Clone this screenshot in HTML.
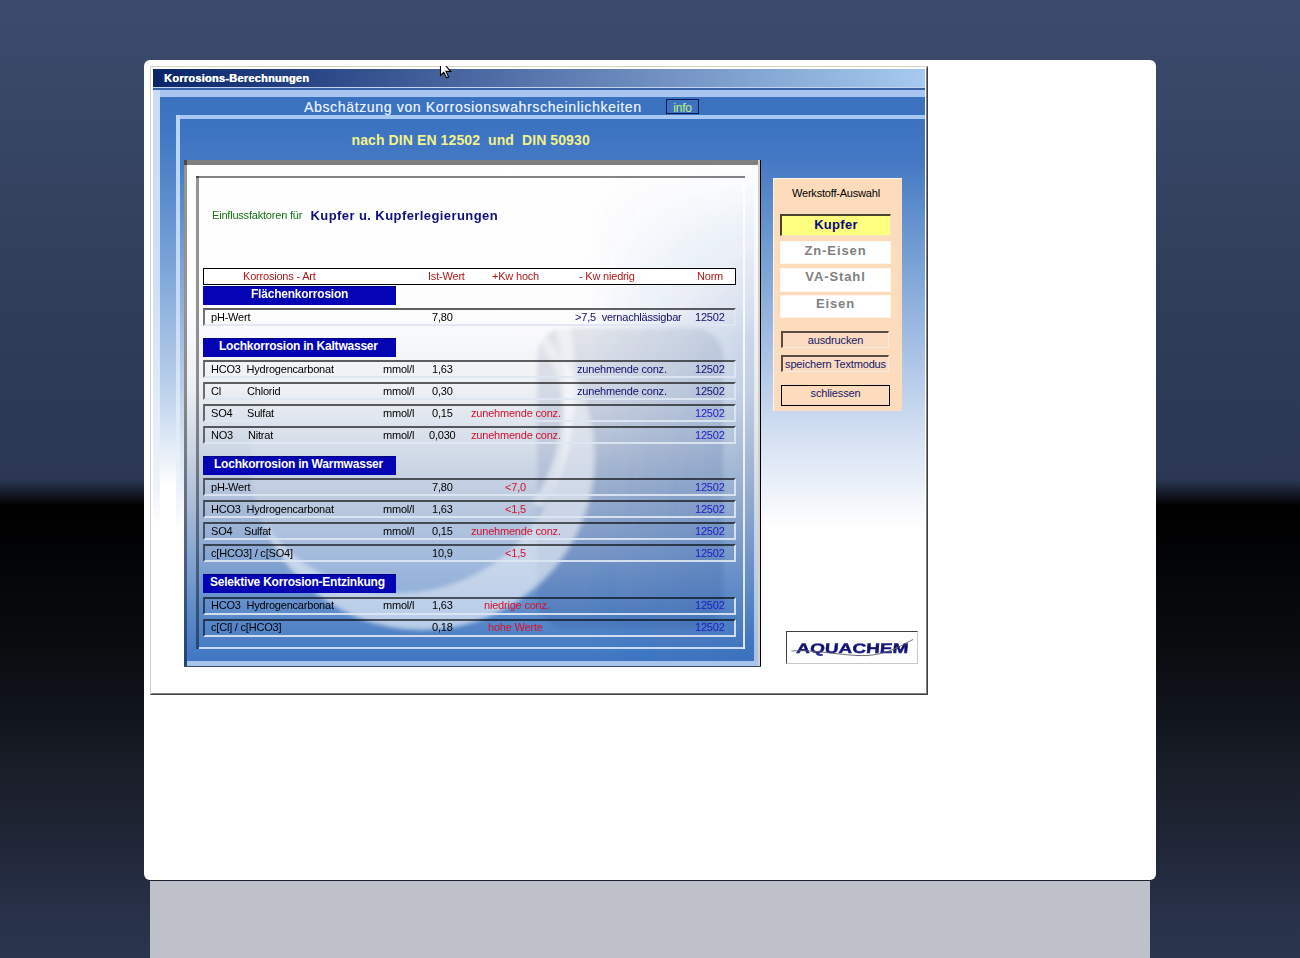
<!DOCTYPE html>
<html><head><meta charset="utf-8">
<style>
*{margin:0;padding:0;box-sizing:border-box}
html,body{width:1300px;height:958px;overflow:hidden}
body{position:relative;font-family:"Liberation Sans",sans-serif;
background:linear-gradient(to bottom,#3c4b6c 0px,#364463 160px,#2f3d58 300px,#2b3753 480px,#151b28 493px,#000 506px,#030406 560px,#0a0c10 650px,#11151d 720px,#1a1e28 770px,#1e2332 820px,#232a3e 870px,#283249 920px,#2a354e 958px);}
.a{position:absolute}
#wp{left:144px;top:60px;width:1012px;height:820px;background:#fff;border-radius:6px}
#gb{left:150px;top:880px;width:1000px;height:78px;background:#bec1ca;border-top:1px solid #1c2233}
#win{left:150px;top:66px;width:778px;height:629px;border-top:1px solid #d4d0c8;border-left:1px solid #d4d0c8;border-right:1px solid #404040;border-bottom:1px solid #404040}
#win2{left:151px;top:67px;width:776px;height:627px;border-top:1px solid #fff;border-left:1px solid #fff;border-right:1px solid #808080;border-bottom:1px solid #808080;background:#fff}
#title{left:153px;top:69px;width:772px;height:18px;background:linear-gradient(to right,#0a246a,#a6caf0)}
#title span{position:absolute;left:11px;top:3px;color:#fff;font-weight:bold;font-size:11px;letter-spacing:0.25px;text-shadow:0.35px 0 0 #fff}
#tl1{left:153px;top:87px;width:772px;height:1px;background:#c4d4ee}
#tl2{left:153px;top:88px;width:772px;height:2px;background:#3a62a6}
#outer{left:153px;top:90px;width:772px;height:602px;background:linear-gradient(to bottom,#3a72c0 0px,#3c74c2 40px,#4478c4 70px,#6a98d0 145px,#9ab8e0 235px,#d4e0f2 345px,#fff 440px)}
#otop{left:153px;top:90px;width:772px;height:7px;background:#a8c6f0}
#lstrip{left:160px;top:97px;width:16px;height:594px;background:linear-gradient(to bottom,#3a72c0 0px,#3e76c2 30px,#5a8ccd 100px,#8ab0dc 200px,#c0d4ec 300px,#fff 390px)}
#oleft{left:153px;top:90px;width:7px;height:601px;background:linear-gradient(to bottom,#c8dcf4 0,#d0e0f4 200px,#f0f4fa 400px,#fff 440px)}
#hdr{left:304px;top:98.5px;color:#e8f0ff;font-size:14px;letter-spacing:0.66px;text-shadow:0.15px 0 0 rgba(232,240,255,.6);white-space:nowrap}
#info{left:666px;top:99px;width:33px;height:15px;border:1px solid #0a1650;color:#c4f27c;font-size:12px;text-align:center;line-height:16px;letter-spacing:-0.2px}
#itop{left:176px;top:115px;width:749px;height:4px;background:#a8c8f4}
#ileft{left:176px;top:115px;width:4px;height:576px;background:linear-gradient(to bottom,#b8d4f8 0,#c8dcf4 200px,#eef4fb 380px,#fff 420px)}
#din{left:351.5px;top:132px;color:#f2f28a;font-size:14px;font-weight:bold;white-space:pre;letter-spacing:0.1px}

#cp{left:184px;top:160px;width:577px;height:507px;background:linear-gradient(to bottom,#fff 0px,#fdfdfe 150px,#eceff4 230px,#ccd6e4 290px,#aebfd9 340px,#84a4d2 400px,#5e8cca 450px,#3c74c2 507px)}
#cpt{left:184px;top:160px;width:574px;height:5px;background:#808080}
#cpl{left:184px;top:160px;width:3px;height:506px;background:rgba(0,0,0,.42)}
#cpr1{left:754px;top:165px;width:4px;height:497px;background:rgba(255,255,255,.55)}
#cpr2{left:758px;top:160px;width:2px;height:507px;background:#d4d0c8}
#cpr3{left:760px;top:160px;width:1px;height:507px;background:#000}
#cpb{left:187px;top:661px;width:571px;height:5px;background:#a8c4ec}
#cpb2{left:184px;top:666px;width:577px;height:1px;background:#3a4a6a}
#frt{left:196px;top:176px;width:549px;height:2px;background:rgba(0,0,0,.48)}
#frl{left:196px;top:176px;width:3px;height:473px;background:rgba(0,0,0,.42)}
#frb{left:199px;top:647px;width:546px;height:2px;background:#c8dcf8}
#frr{left:743px;top:178px;width:2px;height:471px;background:rgba(255,255,255,.8)}
.t{position:absolute;font-size:11px;letter-spacing:-0.2px;white-space:pre;line-height:13px}
#einf{left:212px;top:209px;color:#187018}
#kupf{left:310.5px;top:208.5px;color:#10107a;font-size:13px;font-weight:bold;letter-spacing:0.42px}
#hrow{left:203px;top:268px;width:533px;height:17px;border:1px solid #000;background:#fff}
.hd{color:#b01818;top:270px}
.sec{position:absolute;left:203px;width:193px;height:19px;background:#0404b4;border-top:1px solid #000080;color:#fff;font-weight:bold;font-size:12px;letter-spacing:-0.22px;line-height:14.5px;white-space:pre}
.row{position:absolute;left:203px;width:533px;height:18px;border-top:2px solid rgba(0,0,0,.62);border-left:2px solid rgba(0,0,0,.55);border-bottom:2px solid rgba(222,230,242,.92);border-right:2px solid rgba(222,230,242,.92)}
.row .t{top:1px}
.k,.n,.r,.b{margin-top:1px}
.k{color:#000}
.r{color:#d8102c}
.n{color:#10106e}
.b{color:#1c1cc8}

#pe{left:773px;top:178px;width:129px;height:233px;background:#fcdcbc;border-top:1px solid #fff4ea;border-left:1px solid #fff4ea}
#wa{left:792px;top:187px;color:#000}
.mb{position:absolute;left:780px;width:111px;height:23.5px;background:#fff;border:1px solid #fff6ee;color:#808080;font-weight:bold;font-size:13px;letter-spacing:0.9px;text-align:center;line-height:19px}
#kb{top:214px;height:22px;background:#ffff80;border-top:2px solid #4c4430;border-left:2px solid #4c4430;border-bottom:1px solid #f0e8c0;border-right:1px solid #f0e8c0;color:#0a0a78;letter-spacing:0.3px;line-height:18px}
.pb{position:absolute;left:781px;width:108px;height:17px;border-top:2px solid #5a4c40;border-left:2px solid #5a4c40;border-bottom:1px solid #f4ece4;border-right:1px solid #f4ece4;background:#fbdcc0;color:#16166a;font-size:11px;letter-spacing:-0.15px;text-align:center;line-height:13px;white-space:pre}
#sb{left:781px;top:385px;width:109px;height:21px;border:1.5px solid #000;background:#fcdcbc;line-height:15px}
#logo{left:786px;top:631px;width:132px;height:33px;background:#fff;border-top:1px solid #404040;border-left:1px solid #404040;border-bottom:1px solid #c8c8c8;border-right:1px solid #c8c8c8}
</style></head><body>
<div id="wp" class="a"></div>
<div id="gb" class="a"></div>
<div id="win" class="a"></div>
<div id="win2" class="a"></div>
<div id="title" class="a"><span>Korrosions-Berechnungen</span></div>
<div id="tl1" class="a"></div>
<div id="tl2" class="a"></div>
<div id="outer" class="a"></div>
<div id="otop" class="a"></div>
<div id="lstrip" class="a"></div><div id="oleft" class="a"></div>
<div id="hdr" class="a">Abschätzung von Korrosionswahrscheinlichkeiten</div>
<div id="info" class="a">info</div>
<div id="itop" class="a"></div>
<div id="ileft" class="a"></div>
<div id="din" class="a">nach DIN EN 12502  und  DIN 50930</div>

<div id="cp" class="a"></div>
<svg class="a" style="left:187px;top:165px" width="571" height="496" viewBox="0 0 571 496">
<defs>
<filter id="bl" x="-10%" y="-10%" width="120%" height="120%"><feGaussianBlur stdDeviation="2"/></filter>
<mask id="cres"><rect width="571" height="496" fill="#000"/><circle cx="235" cy="293" r="172" fill="#fff"/><circle cx="212" cy="262" r="166" fill="#000"/></mask>
<linearGradient id="bk" x1="0" y1="0" x2="0" y2="1"><stop offset="0" stop-color="#5a6a88" stop-opacity="0.14"/><stop offset="0.45" stop-color="#40609c" stop-opacity="0.2"/><stop offset="1" stop-color="#2a5098" stop-opacity="0.22"/></linearGradient>
<linearGradient id="rd" x1="0" y1="0" x2="1" y2="0"><stop offset="0" stop-color="#2a5aa8" stop-opacity="0"/><stop offset="1" stop-color="#2a5aa8" stop-opacity="0.22"/></linearGradient>
<linearGradient id="rdv" x1="0" y1="0" x2="0" y2="1"><stop offset="0" stop-color="#fff" stop-opacity="0"/><stop offset="0.35" stop-color="#fff" stop-opacity="1"/><stop offset="1" stop-color="#fff" stop-opacity="1"/></linearGradient>
<mask id="rdm"><rect x="0" y="0" width="571" height="496" fill="url(#rdv)"/></mask>
<linearGradient id="sph" x1="0" y1="0" x2="0" y2="1"><stop offset="0" stop-color="#fff" stop-opacity="0"/><stop offset="0.4" stop-color="#fff" stop-opacity="0.12"/><stop offset="1" stop-color="#fff" stop-opacity="0.3"/></linearGradient>
</defs>
<g filter="url(#bl)">
<rect x="350" y="163" width="186" height="300" rx="28" fill="url(#bk)"/>
<rect x="400" y="0" width="171" height="496" fill="url(#rd)" mask="url(#rdm)"/>
<path d="M374 153 C 392 230, 380 300, 350 340" stroke="#fff" stroke-opacity="0.5" stroke-width="11" fill="none"/>
<circle cx="235" cy="293" r="172" fill="url(#sph)"/>
<rect width="571" height="496" fill="#fff" fill-opacity="0.42" mask="url(#cres)"/>
</g>
</svg>
<div id="cpt" class="a"></div>
<div id="cpl" class="a"></div>
<div id="cpr1" class="a"></div>
<div id="cpr2" class="a"></div>
<div id="cpr3" class="a"></div>
<div id="cpb" class="a"></div>
<div id="cpb2" class="a"></div>
<div id="frt" class="a"></div>
<div id="frl" class="a"></div>
<div id="frb" class="a"></div>
<div id="frr" class="a"></div>
<div id="einf" class="t">Einflussfaktoren für</div>
<div id="kupf" class="t">Kupfer u. Kupferlegierungen</div>
<div id="hrow" class="a"></div>
<div class="t hd" style="left:243px">Korrosions - Art</div>
<div class="t hd" style="left:428px">Ist-Wert</div>
<div class="t hd" style="left:492px">+Kw hoch</div>
<div class="t hd" style="left:579px">- Kw niedrig</div>
<div class="t hd" style="left:697px">Norm</div>

<div class="sec" style="top:286px;padding-left:48px">Flächenkorrosion</div>
<div class="row" style="top:308px"></div>
<div class="t k" style="left:211px;top:310px">pH-Wert</div>
<div class="t k" style="left:432px;top:310px">7,80</div>
<div class="t n" style="left:575px;top:310px">&gt;7,5  vernachlässigbar</div>
<div class="t n" style="left:695px;top:310px">12502</div>

<div class="sec" style="top:338px;padding-left:16px">Lochkorrosion in Kaltwasser</div>
<div class="row" style="top:360px"></div>
<div class="t k" style="left:211px;top:362px">HCO3  Hydrogencarbonat</div>
<div class="t k" style="left:383px;top:362px">mmol/l</div>
<div class="t k" style="left:432px;top:362px">1,63</div>
<div class="t n" style="left:577px;top:362px">zunehmende conz.</div>
<div class="t n" style="left:695px;top:362px">12502</div>
<div class="row" style="top:382px"></div>
<div class="t k" style="left:211px;top:384px">Cl</div>
<div class="t k" style="left:247px;top:384px">Chlorid</div>
<div class="t k" style="left:383px;top:384px">mmol/l</div>
<div class="t k" style="left:432px;top:384px">0,30</div>
<div class="t n" style="left:577px;top:384px">zunehmende conz.</div>
<div class="t n" style="left:695px;top:384px">12502</div>
<div class="row" style="top:404px"></div>
<div class="t k" style="left:211px;top:406px">SO4</div>
<div class="t k" style="left:247px;top:406px">Sulfat</div>
<div class="t k" style="left:383px;top:406px">mmol/l</div>
<div class="t k" style="left:432px;top:406px">0,15</div>
<div class="t r" style="left:471px;top:406px">zunehmende conz.</div>
<div class="t b" style="left:695px;top:406px">12502</div>
<div class="row" style="top:426px"></div>
<div class="t k" style="left:211px;top:428px">NO3</div>
<div class="t k" style="left:248px;top:428px">Nitrat</div>
<div class="t k" style="left:383px;top:428px">mmol/l</div>
<div class="t k" style="left:429px;top:428px">0,030</div>
<div class="t r" style="left:471px;top:428px">zunehmende conz.</div>
<div class="t b" style="left:695px;top:428px">12502</div>

<div class="sec" style="top:456px;padding-left:11px">Lochkorrosion in Warmwasser</div>
<div class="row" style="top:478px"></div>
<div class="t k" style="left:211px;top:480px">pH-Wert</div>
<div class="t k" style="left:432px;top:480px">7,80</div>
<div class="t r" style="left:505px;top:480px">&lt;7,0</div>
<div class="t b" style="left:695px;top:480px">12502</div>
<div class="row" style="top:500px"></div>
<div class="t k" style="left:211px;top:502px">HCO3  Hydrogencarbonat</div>
<div class="t k" style="left:383px;top:502px">mmol/l</div>
<div class="t k" style="left:432px;top:502px">1,63</div>
<div class="t r" style="left:505px;top:502px">&lt;1,5</div>
<div class="t b" style="left:695px;top:502px">12502</div>
<div class="row" style="top:522px"></div>
<div class="t k" style="left:211px;top:524px">SO4</div>
<div class="t k" style="left:244px;top:524px">Sulfat</div>
<div class="t k" style="left:383px;top:524px">mmol/l</div>
<div class="t k" style="left:432px;top:524px">0,15</div>
<div class="t r" style="left:471px;top:524px">zunehmende conz.</div>
<div class="t b" style="left:695px;top:524px">12502</div>
<div class="row" style="top:544px"></div>
<div class="t k" style="left:211px;top:546px">c[HCO3] / c[SO4]</div>
<div class="t k" style="left:432px;top:546px">10,9</div>
<div class="t r" style="left:505px;top:546px">&lt;1,5</div>
<div class="t b" style="left:695px;top:546px">12502</div>

<div class="sec" style="top:574px;padding-left:7px">Selektive Korrosion-Entzinkung</div>
<div class="row" style="top:597px"></div>
<div class="t k" style="left:211px;top:598px">HCO3  Hydrogencarbonat</div>
<div class="t k" style="left:383px;top:598px">mmol/l</div>
<div class="t k" style="left:432px;top:598px">1,63</div>
<div class="t r" style="left:484px;top:598px">niedrige conz.</div>
<div class="t b" style="left:695px;top:598px">12502</div>
<div class="row" style="top:619px"></div>
<div class="t k" style="left:211px;top:620px">c[Cl] / c[HCO3]</div>
<div class="t k" style="left:432px;top:620px">0,18</div>
<div class="t r" style="left:488px;top:620px">hohe Werte</div>
<div class="t b" style="left:695px;top:620px">12502</div>

<div id="pe" class="a"></div>
<div id="wa" class="t">Werkstoff-Auswahl</div>
<div id="kb" class="mb">Kupfer</div>
<div class="mb" style="top:240.5px;line-height:18px">Zn-Eisen</div>
<div class="mb" style="top:268px;line-height:16.5px">VA-Stahl</div>
<div class="mb" style="top:294.5px;line-height:16px">Eisen</div>
<div class="pb" style="top:330.5px;line-height:14.5px">ausdrucken</div>
<div class="pb" style="top:354.5px;line-height:14px">speichern Textmodus</div>
<div id="sb" class="pb">schliessen</div>
<div id="logo" class="a">
<svg width="130" height="31" viewBox="0 0 130 31" style="position:absolute;left:0;top:0">
<defs><linearGradient id="lg" x1="0" y1="0" x2="0" y2="1"><stop offset="0" stop-color="#3838b8"/><stop offset="0.45" stop-color="#0c0c5a"/><stop offset="1" stop-color="#2a2ab0"/></linearGradient></defs>
<g transform="translate(9,20.9) skewX(-5) scale(1,0.86)">
<text x="0" y="0" font-family="Liberation Sans" font-weight="bold" font-size="16" textLength="112" lengthAdjust="spacingAndGlyphs" fill="url(#lg)" stroke="#14147a" stroke-width="0.5">AQUACHEM</text>
</g>
<path d="M4.5 19 C 25 17.5, 45 22, 70 23.5 S 110 16, 126 7.5" stroke="#5a5a6a" stroke-width="0.9" fill="none"/>
</svg>
</div>
<div class="a" style="left:436px;top:66px;width:20px;height:16px;overflow:hidden"><svg style="position:absolute;left:0;top:-8px" width="20" height="24" viewBox="0 0 20 24">
<path d="M4.5 2 L4.5 17.5 L7.8 14.3 L10.6 19.8 L12.6 18.9 L9.9 13.4 L14.8 13.4 Z" fill="#fff" stroke="#000" stroke-width="1.1" stroke-linejoin="miter"/>
</svg></div>
</body></html>
